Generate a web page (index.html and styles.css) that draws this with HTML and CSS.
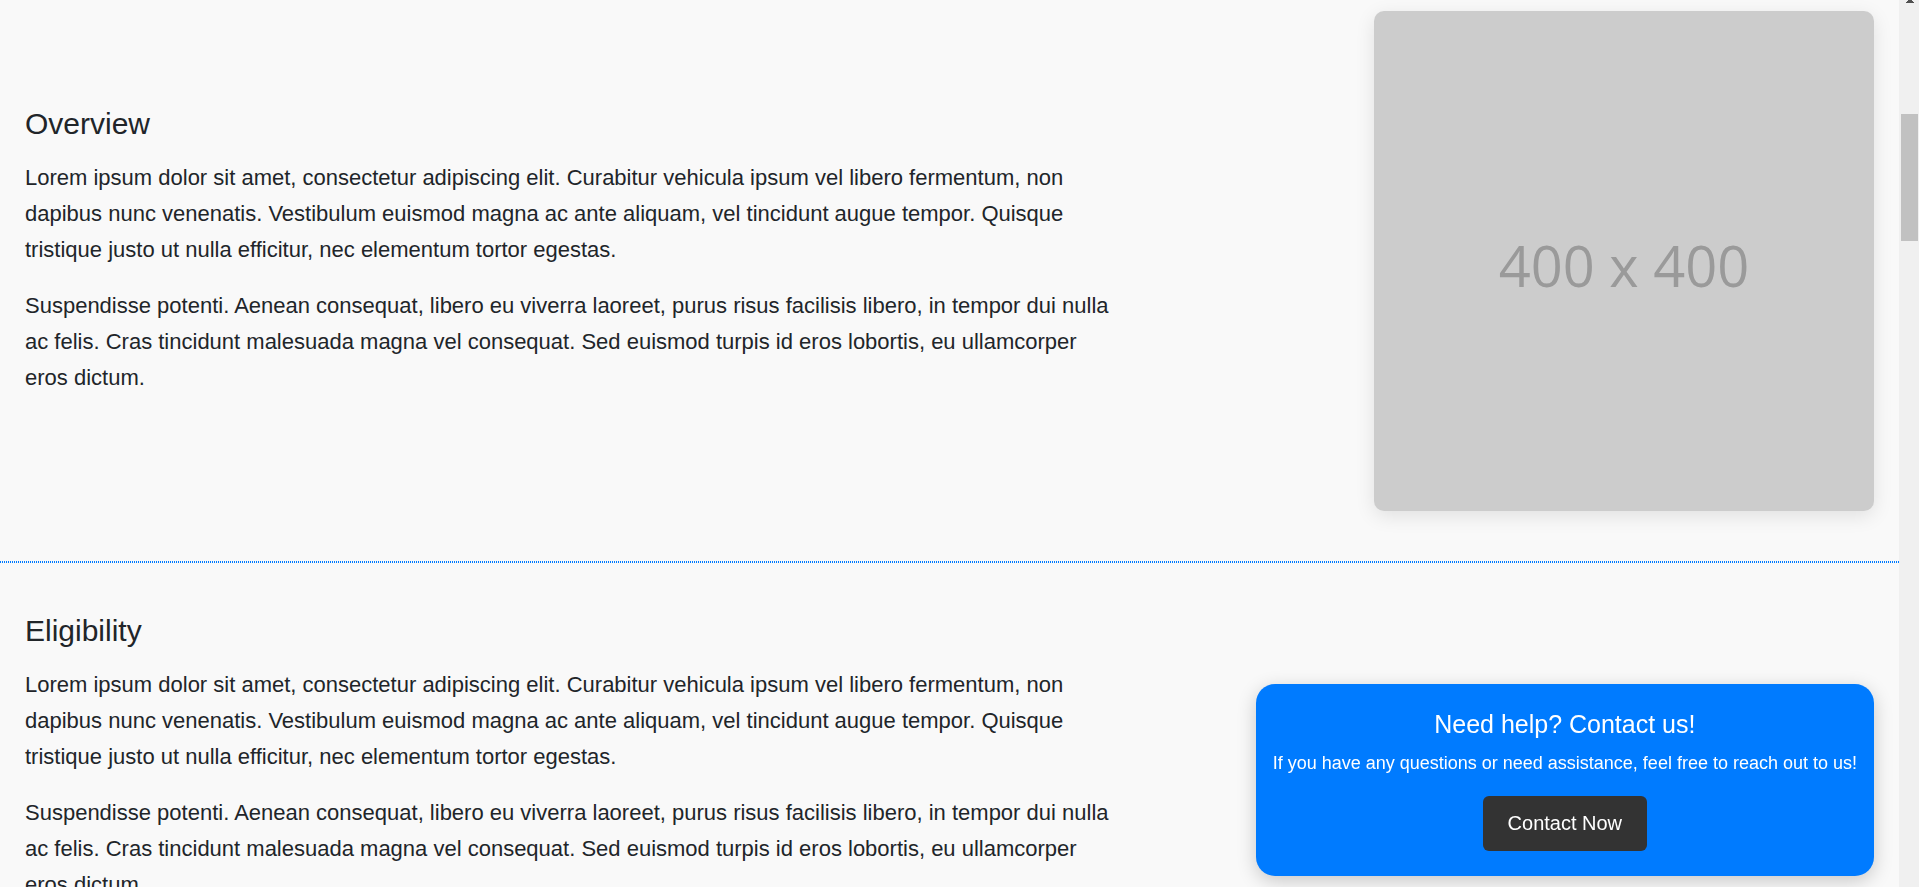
FILE: index.html
```html
<!DOCTYPE html>
<html lang="en">
<head>
<meta charset="utf-8">
<title>Course details</title>
<link rel="stylesheet" href="styles.css">
</head>
<body>
<div class="viewport">
<main class="page">
  <section class="section section-media">
    <div class="copy">
      <h2>Overview</h2>
      <p>Lorem ipsum dolor sit amet, consectetur adipiscing elit. Curabitur vehicula ipsum vel libero fermentum, non dapibus nunc venenatis. Vestibulum euismod magna ac ante aliquam, vel tincidunt augue tempor. Quisque tristique justo ut nulla efficitur, nec elementum tortor egestas.</p>
      <p>Suspendisse potenti. Aenean consequat, libero eu viverra laoreet, purus risus facilisis libero, in tempor dui nulla ac felis. Cras tincidunt malesuada magna vel consequat. Sed euismod turpis id eros lobortis, eu ullamcorper eros dictum.</p>
    </div>
    <div class="placeholder">400 x 400</div>
  </section>
  <hr class="divider">
  <section class="section">
    <div class="copy">
      <h2>Eligibility</h2>
      <p>Lorem ipsum dolor sit amet, consectetur adipiscing elit. Curabitur vehicula ipsum vel libero fermentum, non dapibus nunc venenatis. Vestibulum euismod magna ac ante aliquam, vel tincidunt augue tempor. Quisque tristique justo ut nulla efficitur, nec elementum tortor egestas.</p>
      <p>Suspendisse potenti. Aenean consequat, libero eu viverra laoreet, purus risus facilisis libero, in tempor dui nulla ac felis. Cras tincidunt malesuada magna vel consequat. Sed euismod turpis id eros lobortis, eu ullamcorper eros dictum.</p>
    </div>
  </section>
</main>
<div class="scrollbar" aria-hidden="true">
  <svg class="arrow" viewBox="0 0 20 4"><path d="M9 0h4v1h1v1h1v1H7V2h1V1h1z" fill="#505050"/></svg>
  <div class="thumb"></div>
</div>
</div>
<aside class="contact">
  <h3>Need help? Contact us!</h3>
  <p>If you have any questions or need assistance, feel free to reach out to us!</p>
  <button type="button">Contact Now</button>
</aside>
</body>
</html>
```
FILE: styles.css
```css
* { box-sizing: border-box; }
body {
  margin: 0;
  height: 100vh;
  overflow: hidden;
  background: #f9f9f9;
  color: #212529;
  font-family: "Liberation Sans", Arial, sans-serif;
}
.viewport { display: flex; height: 100%; overflow: hidden; }
.page { flex: 1; min-width: 0; }
.section {
  display: flex;
  align-items: center;
  justify-content: space-between;
  padding: 50px 25px;
}
.section-media { padding-top: 11px; }
.divider {
  height: 2px;
  margin: 0;
  border: 0;
  background: repeating-linear-gradient(to right, #007bff 0 1px, transparent 1px 2px);
}
.copy { width: 59%; }
h2, h3, p { margin: 0; font-weight: 400; }
h2 { margin-bottom: 18px; font-size: 30px; line-height: 36px; }
.copy p { margin-bottom: 20px; font-size: 22px; line-height: 36px; }
.placeholder {
  display: flex;
  align-items: center;
  justify-content: center;
  width: 500px;
  aspect-ratio: 1;
  padding-top: 8px;
  border-radius: 10px;
  background: #ccc;
  box-shadow: 0 5px 19px rgba(0, 0, 0, .1);
  color: #9a9a9a;
  font-family: "Open Sans", sans-serif;
  font-size: 56px;
  font-weight: 500;
}
.scrollbar { width: 20px; background: #f0f0f0; }
.arrow { display: block; width: 20px; height: 4px; }
.thumb { height: 127px; margin: 110px 1px 0 2px; background: #c1c1c1; }
.contact {
  position: fixed;
  right: 45px;
  bottom: 11px;
  padding: 25px 17px;
  border-radius: 19px;
  background: #007bff;
  box-shadow: 0 5px 19px rgba(0, 0, 0, .2);
  color: #fff;
  text-align: center;
}
.contact h3 { margin-bottom: 10px; font-size: 25px; line-height: 30px; }
.contact p { margin-bottom: 19px; font-size: 18px; line-height: 28px; }
.contact button {
  padding: 12px 25px;
  border: 0;
  border-radius: 6px;
  background: #333;
  color: #fff;
  font: 20px/31px "Liberation Sans", Arial, sans-serif;
}
```
